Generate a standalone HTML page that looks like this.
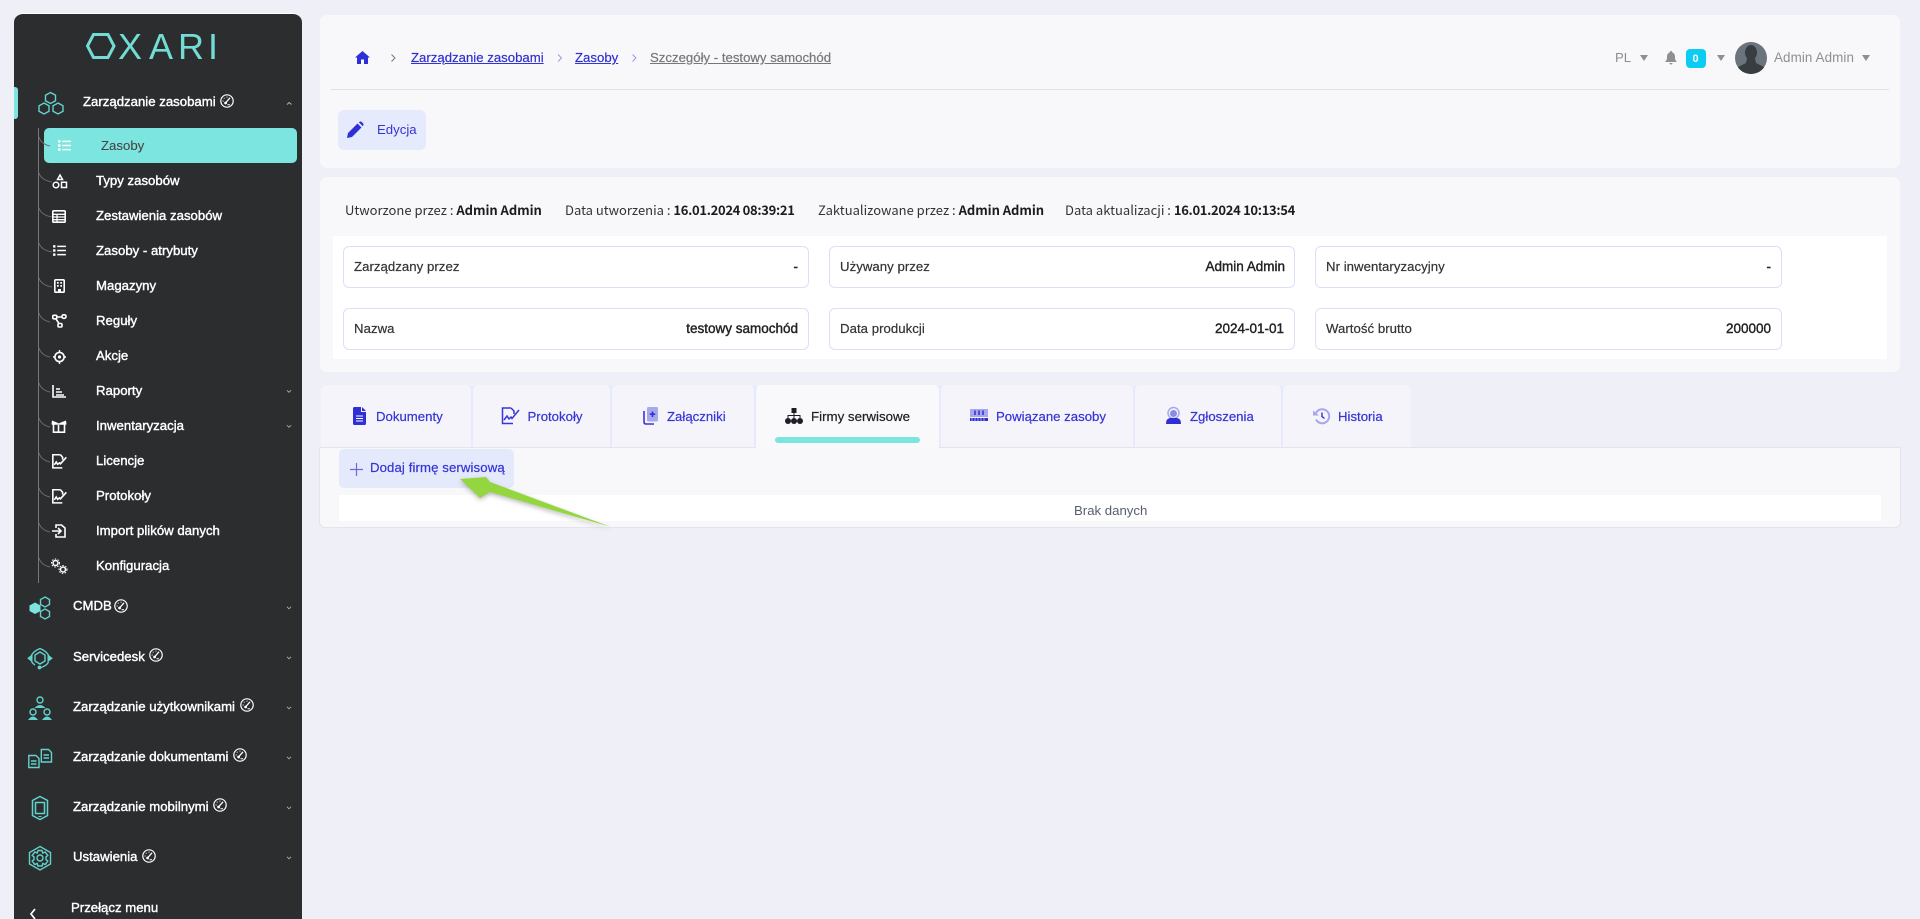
<!DOCTYPE html>
<html lang="pl"><head><meta charset="utf-8"><title>Oxari</title>
<style>
html,body{margin:0;padding:0;width:1920px;height:919px;overflow:hidden;background:#eeeff7;font-family:"Liberation Sans",sans-serif;font-size:13.2px;}
#p{position:relative;width:1920px;height:919px;overflow:hidden}
.a{position:absolute}
.t{position:absolute;white-space:nowrap;line-height:0}
svg{position:absolute;overflow:visible}
.side{left:14px;top:13px;width:288px;height:906px;background:#2c2d2f;border-radius:9px 9px 0 0;position:absolute;border-top:1px solid #fff;box-sizing:border-box}
.m{color:#fff;-webkit-text-stroke:.4px #fff}
.card{position:absolute;background:#f8f8fb;border-radius:7px}
.f{position:absolute;width:466px;height:41.500px;box-sizing:border-box;background:#fff;border:1px solid #dadffa;border-radius:6px}
.l{color:#333;-webkit-text-stroke:.2px #333;letter-spacing:.04px}
.v{color:#222;-webkit-text-stroke:.4px #222;font-size:13.5px}
.s{font-family:"Noto Sans CJK JP","Liberation Sans",sans-serif;font-size:13px;color:#333}
.s b{color:#1c1c1c;font-weight:700;letter-spacing:-.05px}
.s b.d{letter-spacing:-.32px}
.tab{position:absolute;top:385px;height:63px;background:#f5f4fb;border-radius:5px 5px 0 0}
.tl{color:#3434d6;-webkit-text-stroke:.2px #3434d6}
.g{stroke:#63d2cb;fill:none;stroke-width:1.4}
</style></head><body><div id="p">
<svg width="0" height="0" style="position:absolute"><defs>
<symbol id="gauge" viewBox="0 0 14 14" overflow="visible"><circle cx="7" cy="7" r="6.200" fill="none" stroke="#fff" stroke-width="1.200"/><path d="M5.500 9 L10 3.800" stroke="#fff" stroke-width="1.300" fill="none"/><path d="M7.500 10.800h2.500M2.600 7h1M7 2.600v1M3.800 3.800l.7.7" stroke="#fff" stroke-width="1" fill="none"/><circle cx="5.600" cy="9" r="1.400" fill="#fff"/></symbol>
<symbol id="chev" viewBox="0 0 6 4" overflow="visible"><path d="M.5 .5 L3 3 L5.500 .5" fill="none" stroke="#b5b5b5" stroke-width="1"/></symbol>
<symbol id="caret" viewBox="0 0 8 6" overflow="visible"><path d="M0 0H8L4 6Z" fill="#8f8f92"/></symbol>
<symbol id="list" viewBox="0 0 14 12" overflow="visible"><path d="M4.500 1.500H14M4.500 6H14M4.500 10.500H14" stroke="#fff" stroke-width="1.700" fill="none"/><path d="M0 .2h2.600v2.600H0zM0 4.700h2.600v2.600H0zM0 9.200h2.600v2.600H0z" fill="#fff"/></symbol>
<symbol id="doccheck" viewBox="0 0 16 16" overflow="visible"><path d="M9 .8H.9V14.800H11M9 .8L11.300 3.500V6M2.500 11.500L4.500 8.500L6 11L8 9.500L9 10.500L15.300 3.500" fill="none" stroke="#fff" stroke-width="1.700"/></symbol>
</defs></svg>

<div class="side"></div>
<!-- logo -->
<svg style="left:0;top:0" width="320" height="80"><path d="M93.500 34.500H108L114 46L108 57.500H93.500L87.500 46Z" fill="none" stroke="#72dcd5" stroke-width="3"/>
<text x="118 149 178 208" y="59" font-family="Liberation Sans" font-size="36" fill="#72dcd5">XARI</text></svg>
<div class="a" style="left:14px;top:87px;width:4px;height:32px;background:#7de5e0;border-radius:0 3px 3px 0"></div>
<div class="a" style="left:44px;top:128px;width:253px;height:35px;background:#7de5e0;border-radius:5px"></div>

<!-- tree -->
<svg style="left:0;top:0" width="60" height="600"><path d="M38.500 128V583" stroke="#77787a" stroke-width="1" fill="none"/><path d="M39 137Q41 144 50 146M39 173Q41 180 52 182M39 208Q41 215 52 217M39 243Q41 250 52 252M39 278Q41 285 52 287M39 313Q41 320 50 322M39 348Q41 355 50 357M39 383Q41 390 50 392M39 418Q41 425 50 427M39 453Q41 460 50 462M39 488Q41 495 50 497M39 523Q41 530 50 532M39 558Q41 565 50 567" stroke="#6a6b6d" fill="none"/></svg>

<!-- section icons -->
<svg style="left:0;top:0" width="60" height="919">
<g class="g"><path d="M50.500 92.500L55.500 95.200V100.800L50.500 103.500L45.500 100.800V95.200Z"/><path d="M44 103L49 105.800V111.300L44 114L39 111.300V105.800Z"/><path d="M58 103L63 105.800V111.300L58 114L53 111.300V105.800Z"/></g>
<path d="M35 602.500L40.500 605.500V611L35 614L29.500 611V605.500Z" fill="#7de5e0"/>
<g class="g"><path d="M45 597L49.500 599.500V604.500L45 607L40.500 604.500V599.500Z"/><path d="M45 609L49.500 611.500V616.500L45 619L40.500 616.500V611.500Z"/></g>
<g class="g" stroke-width="1.400"><path d="M31.500 655Q34 651 40 648.500Q46 651 48.500 655"/><path d="M48.500 662Q47 665.500 41 667.500"/><path d="M40 652L45 655V661L40 664L35 661V655Z"/><path d="M31.500 661.500Q33 664 35 665"/></g>
<path d="M28 658.300L32 655V661.500ZM52 658.300L48 655V661.500Z" fill="#63d2cb" stroke="#63d2cb"/><circle cx="39.500" cy="667.500" r="1.900" fill="#63d2cb"/>
<g class="g"><circle cx="40" cy="700" r="3"/><circle cx="33" cy="712" r="3"/><circle cx="47" cy="712" r="3"/></g>
<path d="M34.500 708Q40 702 45.500 708ZM28 720Q33 713 38 720ZM42 720Q47 713 52 720Z" fill="#63d2cb"/>
<g class="g"><path d="M28.800 755.500H36L39 758.500V767.500H28.800ZM31 761H36.500M31 764H36.500"/><path d="M41.300 749.500H48.500L51.500 752.500V762H41.300ZM43.500 755H49M43.500 758H49"/></g>
<g class="g"><path d="M40 796.500L47.500 800.500V815.500L40 819.500L32.500 815.500V800.500Z" stroke-width="1.500"/><path d="M35.500 802.500H44.500V813.500H35.500Z" stroke-width="1.500"/></g><path d="M38.500 816.500h3" stroke="#63d2cb"/>
<g class="g"><path d="M40 846.500L50.500 852.500V864L40 870L29.500 864V852.500Z"/><path d="M38 850.500H42L42.800 853L45.200 852L47.800 855.500L46 857L46 859.500L47.800 861L45.200 864.500L42.800 863.500L42 866H38L37.200 863.500L34.800 864.500L32.200 861L34 859.500L34 857L32.200 855.500L34.800 852L37.200 853Z"/><circle cx="40" cy="858" r="3"/></g>
<path d="M35 909L31 914L35 919" fill="none" stroke="#fff" stroke-width="1.700"/>
</svg>

<!-- submenu icons -->
<svg style="left:58px;top:140px;width:13px;height:11px" viewBox="0 0 14 12"><use href="#list" width="14" height="12"/></svg>
<svg style="left:52px;top:174px" width="16" height="16"><path d="M8 1L10.500 5.500H5.500Z" stroke="#fff" fill="none" stroke-width="1.500"/><circle cx="4" cy="11" r="2.800" stroke="#fff" fill="none" stroke-width="1.500"/><path d="M9.500 8.300h5v5.200h-5z" stroke="#fff" fill="none" stroke-width="1.500"/></svg>
<svg style="left:52px;top:210px" width="14" height="14"><rect x=".8" y=".8" width="12.400" height="11.400" rx="1" fill="none" stroke="#fff" stroke-width="1.600"/><path d="M1 4.300H13M1 7H13M1 9.700H13M5 4V12" stroke="#fff" stroke-width="1.300"/></svg>
<svg style="left:53px;top:245px;width:13px;height:11px" viewBox="0 0 14 12"><use href="#list" width="14" height="12"/></svg>
<svg style="left:54px;top:279px" width="11" height="14"><rect x=".8" y=".8" width="9.400" height="12.400" rx="1" fill="none" stroke="#fff" stroke-width="1.600"/><path d="M3 3h1.700v1.700H3zM6.300 3H8v1.700H6.300zM3 6h1.700v1.700H3zM6.300 6H8v1.700H6.300zM4 10h3v3H4z" fill="#fff"/></svg>
<svg style="left:52px;top:314px" width="15" height="14" fill="none" stroke="#fff" stroke-width="1.600"><rect x=".8" y="1.300" width="4" height="3.500" rx="1"/><rect x="10" y=".8" width="4" height="3.500" rx="1.500"/><rect x="6" y="9.500" width="4" height="3.500" rx="1"/><path d="M5 3H10M4 5L7 9.500"/></svg>
<svg style="left:53px;top:350px" width="13" height="14" fill="none" stroke="#fff" stroke-width="1.600"><circle cx="6.500" cy="7" r="4.600"/><circle cx="6.500" cy="7" r="1.600" fill="#fff" stroke="none"/><path d="M6.500 0V2.400M6.500 11.600V14M0 7H2M11 7H13" stroke-width="1.400"/></svg>
<svg style="left:52px;top:385px" width="14" height="13" fill="none" stroke="#fff" stroke-width="1.600"><path d="M1 0V12H14M4 4H8M4 7H10M4 10H12"/></svg>
<svg style="left:51px;top:420px" width="16" height="13" fill="none" stroke="#fff" stroke-width="1.600"><path d="M2.500 4.500V12.200H7.500V5M7.500 5V12.200H13.500V4.500M1 4H15"/><path d="M1 0.500L7 3V4.500H.5ZM15 0.500L8.500 3V4.500H15.500Z" fill="#fff" stroke="none"/></svg>
<svg style="left:52px;top:454px" width="15" height="15"><use href="#doccheck" width="15" height="15"/></svg>
<svg style="left:52px;top:489px" width="15" height="15"><use href="#doccheck" width="15" height="15"/></svg>
<svg style="left:52px;top:524px" width="14" height="14" fill="none" stroke="#fff" stroke-width="1.600"><path d="M4 4V1H9.500L13 4V13H4V10M0 7H9M6 4L9 7L6 10"/></svg>
<svg style="left:51px;top:559px" width="17" height="15" fill="none" stroke="#fff" stroke-width="1.500"><circle cx="4.500" cy="4" r="2.500"/><circle cx="12" cy="10.500" r="2.500"/><circle cx="4.500" cy="4" r="4" stroke-dasharray="1.500 1.500" stroke-width="1"/><circle cx="12" cy="10.500" r="4" stroke-dasharray="1.500 1.500" stroke-width="1"/></svg>

<!-- sidebar text -->
<div class="t m" style="left:83px;top:102px">Zarządzanie zasobami</div>
<div class="t" style="left:101px;top:146px;color:#444;-webkit-text-stroke:.1px #444">Zasoby</div>
<div class="t m" style="left:96px;top:181px">Typy zasobów</div>
<div class="t m" style="left:96px;top:216px">Zestawienia zasobów</div>
<div class="t m" style="left:96px;top:251px">Zasoby - atrybuty</div>
<div class="t m" style="left:96px;top:286px">Magazyny</div>
<div class="t m" style="left:96px;top:321px">Reguły</div>
<div class="t m" style="left:96px;top:356px">Akcje</div>
<div class="t m" style="left:96px;top:391px">Raporty</div>
<div class="t m" style="left:96px;top:426px">Inwentaryzacja</div>
<div class="t m" style="left:96px;top:461px">Licencje</div>
<div class="t m" style="left:96px;top:496px">Protokoły</div>
<div class="t m" style="left:96px;top:531px">Import plików danych</div>
<div class="t m" style="left:96px;top:566px">Konfiguracja</div>
<div class="t m" style="left:73px;top:606px">CMDB</div>
<div class="t m" style="left:73px;top:656.500px">Servicedesk</div>
<div class="t m" style="left:73px;top:706.500px">Zarządzanie użytkownikami</div>
<div class="t m" style="left:73px;top:756.500px">Zarządzanie dokumentami</div>
<div class="t m" style="left:73px;top:806.500px">Zarządzanie mobilnymi</div>
<div class="t m" style="left:73px;top:856.500px">Ustawienia</div>
<div class="t m" style="left:71px;top:908px">Przełącz menu</div>

<svg style="left:0;top:0" width="320" height="919">
<use href="#gauge" x="220" y="94" width="14" height="14"/><use href="#gauge" x="114" y="599" width="14" height="14"/><use href="#gauge" x="149" y="648" width="14" height="14"/><use href="#gauge" x="240" y="698" width="14" height="14"/><use href="#gauge" x="233" y="748" width="14" height="14"/><use href="#gauge" x="213" y="798" width="14" height="14"/><use href="#gauge" x="142" y="849" width="14" height="14"/>
<path d="M287 104.500L289.200 102.500L291.500 104.500" fill="none" stroke="#b5b5b5"/>
<use href="#chev" x="286.500" y="389.500" width="5" height="4"/><use href="#chev" x="286.500" y="424.500" width="5" height="4"/><use href="#chev" x="286.500" y="606" width="5" height="4"/><use href="#chev" x="286.500" y="656" width="5" height="4"/><use href="#chev" x="286.500" y="706" width="5" height="4"/><use href="#chev" x="286.500" y="756" width="5" height="4"/><use href="#chev" x="286.500" y="806" width="5" height="4"/><use href="#chev" x="286.500" y="856" width="5" height="4"/>
</svg>

<!-- card 1 -->
<div class="card" style="left:320px;top:15px;width:1580px;height:153px"></div>
<div class="a" style="left:331px;top:89px;width:1558px;height:1px;background:#e3e3e6"></div>
<svg style="left:355px;top:51px" width="15" height="13"><path d="M7.500 0L15 6.500H13V13H9V8.500H6V13H2V6.500H0Z" fill="#2f2fd6"/></svg>
<svg style="left:0;top:0" width="700" height="80" fill="none" stroke-width="1"><path d="M391.500 54.500L395 58L391.500 61.500" stroke="#777"/><path d="M558 54.500L561.500 58L558 61.500" stroke="#9a9ae8"/><path d="M632.500 54.500L636 58L632.500 61.500" stroke="#9a9ae8"/></svg>
<div class="t tl" style="left:411px;top:58px;text-decoration:underline;color:#2e2ecc">Zarządzanie zasobami</div>
<div class="t tl" style="left:575px;top:58px;text-decoration:underline;color:#2e2ecc">Zasoby</div>
<div class="t" style="left:650px;top:58px;text-decoration:underline;color:#777;-webkit-text-stroke:.2px #777">Szczegóły - testowy samochód</div>

<div class="t" style="left:1615px;top:58px;color:#8f8f92">PL</div>
<svg style="left:1640px;top:55px" width="8" height="6"><use href="#caret" width="8" height="6"/></svg>
<svg style="left:1665px;top:51px" width="12" height="14"><path d="M6 0C7 0 7.300 .8 7.300 1.500C9.500 2.200 10 4 10 6C10 8.500 10.500 9.500 12 11H0C1.500 9.500 2 8.500 2 6C2 4 2.500 2.200 4.700 1.500C4.700 .8 5 0 6 0ZM4.500 12H7.500C7.500 13 6.800 13.500 6 13.500S4.500 13 4.500 12Z" fill="#8f8f92"/></svg>
<div class="a" style="left:1686px;top:49px;width:20px;height:19px;border-radius:4px;background:#0bcdf3"></div>
<div class="t" style="left:1692.500px;top:59px;color:#fff;font-weight:700;font-size:11px">0</div>
<svg style="left:1717px;top:55px" width="8" height="6"><use href="#caret" width="8" height="6"/></svg>
<svg style="left:1735px;top:42px" width="32" height="32"><defs><clipPath id="av"><circle cx="16" cy="16" r="16"/></clipPath></defs><circle cx="16" cy="16" r="16" fill="#6b747d"/><g clip-path="url(#av)" fill="#383d42"><ellipse cx="16" cy="10.500" rx="6" ry="7.500"/><path d="M12 16H20L21 21L29 25V32H3V25L11 21Z"/></g></svg>
<div class="t" style="left:1774px;top:58px;color:#8f8f92;font-size:13.400px;letter-spacing:.1px">Admin Admin</div>
<svg style="left:1862px;top:55px" width="8" height="6"><use href="#caret" width="8" height="6"/></svg>

<div class="a" style="left:338px;top:110px;width:88px;height:40px;background:#e6eafd;border-radius:6px"></div>
<svg style="left:347px;top:121px" width="17" height="17"><path d="M0 17L1 12L10.500 2.500L14.500 6.500L5 16ZM11.800 1.300C13 .2 14 .2 15 1.200L15.800 2C16.800 3 16.800 4 15.800 5.200Z" fill="#2f2fd6"/></svg>
<div class="t" style="left:377px;top:130px;color:#3434d6">Edycja</div>

<!-- card 2 -->
<div class="card" style="left:320px;top:177px;width:1580px;height:195px"></div>
<div class="t s" style="left:345px;top:210px">Utworzone przez : <b>Admin Admin</b></div>
<div class="t s" style="left:565px;top:210px">Data utworzenia : <b class="d">16.01.2024 08:39:21</b></div>
<div class="t s" style="left:818px;top:210px">Zaktualizowane przez : <b>Admin Admin</b></div>
<div class="t s" style="left:1065px;top:210px">Data aktualizacji : <b class="d">16.01.2024 10:13:54</b></div>
<div class="a" style="left:333px;top:236px;width:1554px;height:123px;background:#fff"></div>
<div class="f" style="left:343px;top:246px"></div><div class="f" style="left:829px;top:246px"></div><div class="f" style="left:1315px;top:246px;width:467px"></div>
<div class="f" style="left:343px;top:308px"></div><div class="f" style="left:829px;top:308px"></div><div class="f" style="left:1315px;top:308px;width:467px"></div>
<div class="t l" style="left:354px;top:267px">Zarządzany przez</div>
<div class="t v" style="right:1122px;top:267px">-</div>
<div class="t l" style="left:840px;top:267px">Używany przez</div>
<div class="t v" style="right:635px;top:267px">Admin Admin</div>
<div class="t l" style="left:1326px;top:267px">Nr inwentaryzacyjny</div>
<div class="t v" style="right:149px;top:267px">-</div>
<div class="t l" style="left:354px;top:329px">Nazwa</div>
<div class="t v" style="right:1122px;top:329px">testowy samochód</div>
<div class="t l" style="left:840px;top:329px">Data produkcji</div>
<div class="t v" style="right:636px;top:329px">2024-01-01</div>
<div class="t l" style="left:1326px;top:329px">Wartość brutto</div>
<div class="t v" style="right:149px;top:329px">200000</div>

<!-- tabs -->
<div class="a" style="left:321px;top:386px;width:1090px;height:62px;background:#e7eafc"></div>
<div class="tab" style="left:321px;width:150px"></div>
<div class="tab" style="left:473px;width:137px"></div>
<div class="tab" style="left:612px;width:142px"></div>
<div class="tab" style="left:941px;width:192px"></div>
<div class="tab" style="left:1135px;width:146px"></div>
<div class="tab" style="left:1283px;width:128px"></div>
<div class="a" style="left:320px;top:448px;width:1580px;height:79px;background:#f8f8fb;border-radius:0 0 5px 5px;box-shadow:0 0 0 1px #e3e4ec"></div>
<div class="tab" style="left:756px;width:183px;height:64px;background:#f9f9fc"></div>
<div class="a" style="left:775px;top:437px;width:145px;height:6px;background:#7de5e0;border-radius:3px"></div>

<svg style="left:353px;top:407px" width="13" height="18"><path d="M0 1.500Q0 0 1.500 0H8V5H13V16.500Q13 18 11.500 18H1.500Q0 18 0 16.500Z" fill="#2f2fd6"/><path d="M9 0L13 4H9Z" fill="#2f2fd6"/><path d="M3 9H10M3 11.500H10M3 14H10" stroke="#fff"/></svg>
<svg style="left:501px;top:407px" width="19" height="18" fill="none" stroke="#3a35d4" stroke-width="1.500"><path d="M10 1H1.500V16.500H12M10 1L13 4V7M3 13L6 9L8 12L10 10L11 11.500L18 3"/></svg>
<svg style="left:643px;top:407px" width="15" height="18"><path d="M1 4V15Q1 17 3 17H11" fill="none" stroke="#3a35d4" stroke-width="1.600"/><rect x="4" y="0" width="11" height="14.500" rx="1.500" fill="#a8a8ee"/><path d="M9.500 4.500V10M6.800 7.200H12.200" stroke="#2f2fd6" stroke-width="1.600"/></svg>
<div class="t tl" style="left:376px;top:417px">Dokumenty</div>
<div class="t tl" style="left:527.500px;top:417px">Protokoły</div>
<div class="t tl" style="left:667px;top:417px">Załączniki</div>
<svg style="left:785px;top:416px;margin-top:-8px" width="18" height="17"><path d="M6.500 0h5v5h-5z" fill="#1d1d24"/><path d="M3 10.500V7.500H15V10.500M9 5V10.500" stroke="#1d1d24" fill="none"/><circle cx="3" cy="13" r="3" fill="#1d1d24"/><circle cx="9" cy="13" r="3" fill="#1d1d24"/><circle cx="15" cy="13" r="3" fill="#1d1d24"/></svg>
<div class="t" style="left:811px;top:417px;color:#1d1d24;-webkit-text-stroke:.2px #1d1d24;font-size:13.300px">Firmy serwisowe</div>
<svg style="left:970px;top:409px" width="18" height="13"><rect width="18" height="8" y="0" fill="#a7a7ec"/><rect width="18" height="3" y="9" fill="#2f2fd6"/><path d="M5 1.500V6M9 1.500V6M13 1.500V6" stroke="#2f2fd6" stroke-width="1.500"/><path d="M2 9V12M5 9V12M8 9V12M11 9V12M14 9V12" stroke="#f5f4fb" stroke-width=".6"/></svg>
<div class="t tl" style="left:996px;top:417px">Powiązane zasoby</div>
<svg style="left:1166px;top:407px" width="15" height="17"><circle cx="7.500" cy="6" r="5.500" fill="none" stroke="#a7a7ec" stroke-width="1.500"/><circle cx="7.500" cy="6.500" r="3.500" fill="#8b8be4"/><path d="M0 17Q0 11.500 4 11H11Q15 11.500 15 17Z" fill="#2f2fd6"/></svg>
<div class="t tl" style="left:1190px;top:417px">Zgłoszenia</div>
<svg style="left:1313px;top:408px" width="17" height="16" fill="none"><path d="M3 5A7 7 0 1 1 3 11.500" stroke="#a7a7ec" stroke-width="2"/><path d="M0 2.500L0 7.500H6Z" fill="#a7a7ec"/><path d="M9 4.500V8.500L11.500 10.500" stroke="#2f2fd6" stroke-width="1.400"/></svg>
<div class="t tl" style="left:1338px;top:417px">Historia</div>

<!-- panel -->
<div class="a" style="left:339px;top:449px;width:175px;height:39px;background:#e5e9fc;border-radius:5px"></div>
<svg style="left:350px;top:463px" width="13" height="13"><path d="M6.500 0V13M0 6.500H13" stroke="#6b6bd8" stroke-width="1.200"/></svg>
<div class="t tl" style="left:370px;top:468px;letter-spacing:.1px">Dodaj firmę serwisową</div>
<div class="a" style="left:339px;top:495px;width:1542px;height:26px;background:#fff"></div>
<div class="t" style="left:1074px;top:511px;color:#555e70">Brak danych</div>

<!-- arrow -->
<svg style="left:0;top:0" width="700" height="560"><defs><filter id="sh" x="-20%" y="-20%" width="140%" height="150%"><feDropShadow dx="0" dy="2" stdDeviation="2.500" flood-color="#666" flood-opacity=".45"/></filter></defs><path d="M460 479L486 477L490 482L611 527L490 492L480 498Z" fill="#93d63f" filter="url(#sh)"/></svg>
</div></body></html>
